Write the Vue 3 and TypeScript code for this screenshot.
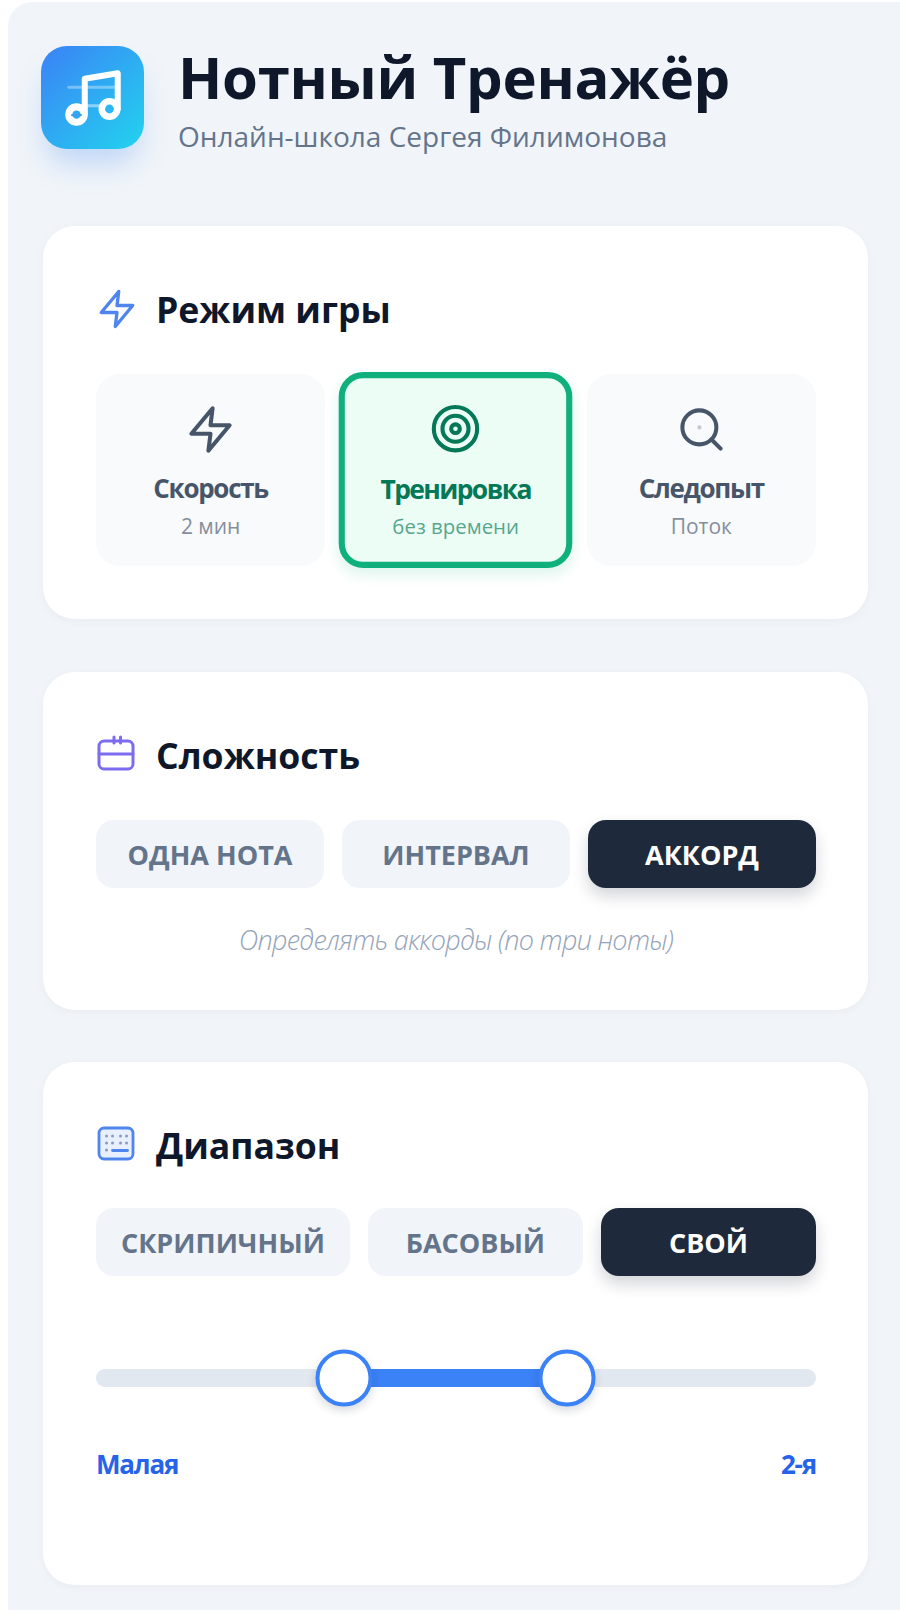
<script setup lang="ts">
interface Mode { name: string; sub: string; icon: string; active?: boolean }
const modes: Mode[] = [
  { name: 'Скорость', sub: '2 мин', icon: 'zap' },
  { name: 'Тренировка', sub: 'без времени', icon: 'target', active: true },
  { name: 'Следопыт', sub: 'Поток', icon: 'search' },
]
const levels = [
  { label: 'Одна нота' },
  { label: 'Интервал' },
  { label: 'Аккорд', active: true },
]
const ranges = [
  { label: 'Скрипичный' },
  { label: 'Басовый' },
  { label: 'Свой', active: true },
]
const lo = 34.4
const hi = 65.4
</script>

<template>
  <div class="page">
    <div class="frame">
      <header class="header">
        <div class="logo">
          <svg class="logo-icon" viewBox="0 0 24 24" fill="none" stroke="#fff" stroke-width="2.2" stroke-linecap="round" stroke-linejoin="round">
            <path d="M3.2 8.1h17" stroke-opacity=".35" stroke-width="1.1" />
            <path d="M9 14.8h6" stroke-opacity=".45" stroke-width="1.1" />
            <path d="M9 18V5l12-2v13" />
            <circle cx="6" cy="18" r="2.8" stroke-width="2.6" />
            <circle cx="18" cy="16" r="2.8" stroke-width="2.4" />
            <path d="M4.4 18.2h3.2" stroke="#3b9cf4" stroke-width=".8" />
          </svg>
        </div>
        <div class="brand">
          <h1 class="title">Нотный Тренажёр</h1>
          <p class="subtitle">Онлайн-школа Сергея Филимонова</p>
        </div>
      </header>

      <section class="card card-mode">
        <h2 class="card-title">
          <svg class="head-icon blue" viewBox="0 0 24 24" fill="none" stroke="currentColor" stroke-width="1.9" stroke-linecap="round" stroke-linejoin="round">
            <polygon points="13 2 3 14 12 14 11 22 21 10 12 10 13 2" />
          </svg>
          Режим игры
        </h2>
        <div class="modes">
          <div v-for="m in modes" :key="m.name" class="mode" :class="{ 'mode-active': m.active }">
            <svg class="mode-icon" viewBox="0 0 24 24" fill="none" stroke="currentColor" stroke-width="1.9" stroke-linecap="round" stroke-linejoin="round">
              <polygon v-if="m.icon === 'zap'" points="13 2 3 14 12 14 11 22 21 10 12 10 13 2" />
              <template v-else-if="m.icon === 'target'">
                <circle cx="12" cy="12" r="10" />
                <circle cx="12" cy="12" r="6" />
                <circle cx="12" cy="12" r="2" />
              </template>
              <template v-else>
                <circle cx="11" cy="11" r="8" />
                <path d="m21 21-4.3-4.3" />
                <path d="M11 11h.01" stroke-opacity=".3" />
              </template>
            </svg>
            <span class="mode-name">{{ m.name }}</span>
            <span class="mode-sub">{{ m.sub }}</span>
          </div>
        </div>
      </section>

      <section class="card card-level">
        <h2 class="card-title">
          <svg class="head-icon violet" viewBox="0 0 42 42" fill="none" stroke="currentColor" stroke-width="3" stroke-linecap="round" stroke-linejoin="round">
            <rect x="3" y="7" width="34" height="28" rx="5" />
            <path d="M3 20h34" />
            <path d="M18 3v6" />
            <path d="M24.5 3v6" />
          </svg>
          Сложность
        </h2>
        <div class="seg">
          <div v-for="l in levels" :key="l.label" class="seg-btn" :class="{ 'seg-on': l.active }">{{ l.label }}</div>
        </div>
        <p class="note">Определять аккорды (по три ноты)</p>
      </section>

      <section class="card card-range">
        <h2 class="card-title">
          <svg class="head-icon blue" viewBox="0 0 42 42" fill="none" stroke="currentColor" stroke-width="2.8" stroke-linecap="round" stroke-linejoin="round">
            <rect x="3" y="4" width="34" height="31" rx="5" fill="#e8f0fe" />
            <g stroke="#8a9bc0" stroke-width="3">
              <path d="M10.5 12h.01M16.5 12h.01M24.5 12h.01M30.5 12h.01M10.5 19h.01M16.5 19h.01M24.5 19h.01M30.5 19h.01M10.5 26h.01" />
            </g>
            <path d="M16.5 26.5h15" />
          </svg>
          Диапазон
        </h2>
        <div class="seg">
          <div v-for="r in ranges" :key="r.label" class="seg-btn" :class="{ 'seg-on': r.active }">{{ r.label }}</div>
        </div>
        <div class="slider">
          <div class="fill" :style="{ left: lo + '%', width: hi - lo + '%' }"></div>
          <div class="thumb" :style="{ left: lo + '%' }"></div>
          <div class="thumb" :style="{ left: hi + '%' }"></div>
        </div>
        <div class="ends">
          <span>Малая</span>
          <span>2-я</span>
        </div>
      </section>
    </div>
  </div>
</template>

<style scoped>
.page {
  width: 900px;
  height: 1610px;
  overflow: hidden;
  background: #fff;
  font-family: "Open Sans", "Noto Sans", sans-serif;
  padding: 2px 0 0 8px;
  box-sizing: border-box;
}
.frame {
  width: 920px;
  min-height: 1640px;
  box-sizing: border-box;
  background: #f1f5f9;
  border-radius: 24px;
  padding: 44px 0 0 35px;
}
.header {
  display: flex;
  gap: 34px;
  height: 180px;
  margin-left: -2px;
  align-items: flex-start;
}
.logo {
  width: 103px;
  height: 103px;
  border-radius: 26px;
  background: linear-gradient(135deg, #3b82f6, #22d3ee);
  box-shadow: 0 20px 30px -6px rgba(59, 130, 246, 0.28);
  display: flex;
  align-items: center;
  justify-content: center;
  flex: none;
}
.logo-icon {
  width: 66px;
  height: 66px;
}
.brand {
  margin-top: -5px;
}
.title {
  margin: 0;
  font-size: 58px;
  line-height: 72px;
  font-weight: 700;
  color: #0f172a;
  letter-spacing: -0.3px;
}
.subtitle {
  margin: 5px 0 0;
  font-size: 28px;
  line-height: 36px;
  color: #64748b;
}
.card {
  width: 825px;
  box-sizing: border-box;
  background: #fff;
  border-radius: 32px;
  padding: 53px 52px 53px 53px;
  box-shadow: 0 2px 10px rgba(15, 23, 42, 0.04);
}
.card-mode {
  margin-bottom: 53px;
}
.card-level {
  margin-bottom: 52px;
}
.card-range {
  height: 523px;
}
.card-title {
  margin: 0 0 35px;
  display: flex;
  align-items: center;
  gap: 18px;
  font-size: 35.6px;
  line-height: 60px;
  font-weight: 700;
  color: #0f172a;
}
.card-range .card-title {
  margin-bottom: 33px;
}
.head-icon {
  width: 42px;
  height: 42px;
  flex: none;
}
.blue { color: #4f86ee; }
.violet { color: #7c6cf0; }
.modes {
  display: grid;
  grid-template-columns: repeat(3, 1fr);
  gap: 16px;
}
.mode {
  height: 192px;
  box-sizing: border-box;
  border-radius: 24px;
  background: #f8fafc;
  color: #475569;
  display: flex;
  flex-direction: column;
  align-items: center;
  padding-top: 30px;
}
.mode-active {
  background: #ecfdf5;
  border: 6px solid #10b07c;
  color: #047857;
  padding-top: 24px;
  transform: scale(1.02);
  box-shadow: 0 6px 14px rgba(16, 185, 129, 0.14);
}
.mode-icon {
  width: 51px;
  height: 51px;
}
.mode-name {
  margin-top: 16px;
  font-size: 26px;
  line-height: 34px;
  font-weight: 700;
  letter-spacing: -1.3px;
}
.mode-active .mode-name {
  letter-spacing: -1.6px;
}
.mode-sub {
  margin-top: 8px;
  font-size: 21px;
  line-height: 26px;
  opacity: 0.65;
}
.mode-active .mode-sub {
  font-size: 20px;
}
.seg {
  display: flex;
  gap: 18px;
}
.seg-btn {
  flex: 1 1 0;
  height: 68px;
  padding: 0 25px;
  border-radius: 18px;
  background: #f1f5f9;
  color: #64748b;
  font-size: 27px;
  font-weight: 700;
  text-transform: uppercase;
  white-space: nowrap;
  display: flex;
  align-items: center;
  justify-content: center;
}
.seg-on {
  background: #1e293b;
  color: #fff;
  box-shadow: 0 8px 16px rgba(15, 23, 42, 0.18);
}
.note {
  margin: 35px 0 0;
  text-align: center;
  font-size: 27px;
  line-height: 34px;
  font-style: italic;
  font-weight: 300;
  color: #94a3b8;
  letter-spacing: -0.7px;
}
.slider {
  position: relative;
  height: 18px;
  margin-top: 93px;
  border-radius: 9px;
  background: #e2e8f0;
}
.fill {
  position: absolute;
  top: 0;
  bottom: 0;
  background: #3b82f6;
}
.thumb {
  position: absolute;
  top: 50%;
  width: 57px;
  height: 57px;
  box-sizing: border-box;
  border-radius: 50%;
  background: #fff;
  border: 4px solid #3b82f6;
  transform: translate(-50%, -50%);
  box-shadow: 0 4px 10px rgba(15, 23, 42, 0.16);
}
.ends {
  display: flex;
  justify-content: space-between;
  margin-top: 60px;
  font-size: 26px;
  line-height: 34px;
  font-weight: 700;
  letter-spacing: -1.2px;
  color: #2563eb;
}
</style>
